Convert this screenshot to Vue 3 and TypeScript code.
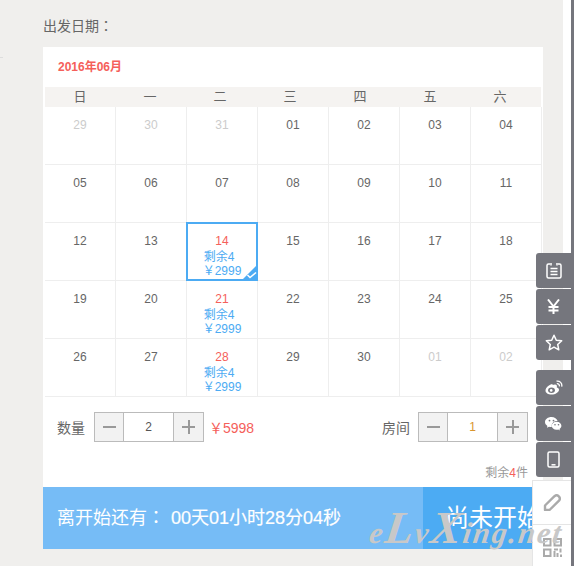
<script setup lang="ts">
interface Day {
  label: string
  muted?: boolean
  stock?: boolean
  selected?: boolean
}

const weekdays = ['日', '一', '二', '三', '四', '五', '六']

const mk = (n: number): Day => {
  const label = String(n).padStart(2, '0')
  if (n === 14) return { label, stock: true, selected: true }
  if (n === 21 || n === 28) return { label, stock: true }
  return { label }
}

const days: Day[] = [
  ...[29, 30, 31].map((n) => ({ label: String(n), muted: true })),
  ...Array.from({ length: 30 }, (_, i) => mk(i + 1)),
  { label: '01', muted: true },
  { label: '02', muted: true },
]
</script>

<template>
  <div class="page">
    <i class="edge-tick"></i>
    <div class="title">出发日期：</div>

    <div class="card">
      <div class="month">2016年06月</div>
      <div class="cal">
        <div class="week">
          <span v-for="w in weekdays" :key="w">{{ w }}</span>
        </div>
        <div class="grid">
          <div
            v-for="(d, i) in days"
            :key="i"
            class="cell"
            :class="{ muted: d.muted, stock: d.stock, selected: d.selected }"
          >
            <div class="num">{{ d.label }}</div>
            <template v-if="d.stock">
              <div class="info first">剩余4</div>
              <div class="info">￥2999</div>
            </template>
            <svg v-if="d.selected" class="tick" width="17" height="17" viewBox="0 0 17 17">
              <path d="M17 0V17H0Z" fill="#4cabf3" />
              <path d="M6.500 11l2.500 2.500 6-5" fill="none" stroke="#fff" stroke-width="1.600" />
            </svg>
          </div>
        </div>
      </div>

      <div class="controls">
        <div class="group">
          <span class="label">数量</span>
          <div class="stepper">
            <span class="btn minus"></span>
            <span class="val">2</span>
            <span class="btn plus"></span>
          </div>
          <span class="total">￥5998</span>
        </div>
        <div class="group">
          <span class="label">房间</span>
          <div class="stepper">
            <span class="btn minus"></span>
            <span class="val gold">1</span>
            <span class="btn plus"></span>
          </div>
        </div>
      </div>

      <div class="remain">剩余<b>4</b>件</div>

      <div class="bar">
        <div class="countdown">
          <span class="cd-label">离开始还有：</span>
          <span class="cd-time">00天01小时28分04秒</span>
        </div>
        <div class="action">尚未开始</div>
      </div>
    </div>

    <aside class="side">
      <div class="tools">
        <a class="tool">
          <svg width="16" height="17" viewBox="0 0 16 17" fill="none" stroke="#fff" stroke-width="1.500">
            <path d="M4 2H2.500A1.500 1.500 0 0 0 1 3.500v11A1.500 1.500 0 0 0 2.500 16h11a1.500 1.500 0 0 0 1.500-1.500v-11A1.500 1.500 0 0 0 13.500 2H12" />
            <path d="M5 1v2.500M11 1v2.500M4.500 6.500h7M4.500 9.500h7M4.500 12.500h7" />
          </svg>
        </a>
        <a class="tool">
          <svg width="13" height="15" viewBox="0 0 13 15" fill="none" stroke="#fff" stroke-width="2">
            <path d="M1 .5l5.500 7 5.500-7M6.500 7.500V15M1.500 8h10M1.500 11.500h10" />
          </svg>
        </a>
        <a class="tool">
          <svg width="18" height="17" viewBox="0 0 18 17" fill="none" stroke="#fff" stroke-width="1.500" stroke-linejoin="round">
            <path d="M9 1.200l2.300 5 5.400.6-4 3.700 1.100 5.300L9 13.100l-4.800 2.700 1.100-5.300-4-3.700 5.400-.6z" />
          </svg>
        </a>
      </div>
      <div class="tools second">
        <a class="tool">
          <svg width="18" height="15" viewBox="0 0 18 15" fill="none" stroke="#fff">
            <path d="M7.500 4C4.500 4.500.5 7.500.5 10.500c0 2.500 2.700 4 6 4 4 0 7.500-2.300 7.500-4.800 0-1.500-1.300-2-2.200-2.300.5-1.600-.2-2.900-1.800-2.900-.9 0-1.700.2-2.500.5z" fill="#fff" stroke="none" />
            <ellipse cx="6.500" cy="10.200" rx="3.400" ry="2.700" fill="#75767d" stroke="none" />
            <circle cx="6.200" cy="10.400" r="1.300" fill="#fff" stroke="none" />
            <path d="M11.500 1.200c3.200-.6 6 1.900 5.200 5.400M11.800 3.700c1.800-.2 2.900 1 2.500 2.700" stroke-width="1.300" />
          </svg>
        </a>
        <a class="tool">
          <svg width="17" height="14" viewBox="0 0 17 14">
            <path d="M6.500 0C3 0 0 2.200 0 5c0 1.600.9 2.900 2.400 3.900L1.900 10.800l2.100-1.100c.8.200 1.600.3 2.500.3h.4a4 4 0 0 1-.2-1.300c0-2.700 2.500-4.700 5.600-4.700h.3C12 1.700 9.500 0 6.500 0z" fill="#fff" />
            <path d="M11.700 4.800c-2.900 0-5 1.800-5 4s2.100 4 5 4c.6 0 1.100-.1 1.600-.2l1.600.9-.4-1.500c1.200-.8 1.900-2 1.900-3.200 0-2.200-2.100-4-4.700-4z" fill="#fff" />
            <circle cx="4.500" cy="3.600" r=".9" fill="#75767d" />
            <circle cx="8.500" cy="3.600" r=".9" fill="#75767d" />
            <circle cx="10" cy="7.800" r=".8" fill="#75767d" />
            <circle cx="13.500" cy="7.800" r=".8" fill="#75767d" />
          </svg>
        </a>
        <a class="tool">
          <svg width="13" height="17" viewBox="0 0 13 17" fill="none" stroke="#fff" stroke-width="1.500">
            <rect x="1" y="1" width="11" height="15" rx="1.500" />
            <path d="M4.500 13.800h4" />
          </svg>
        </a>
      </div>
      <div class="extra">
        <a class="extra-item">
          <svg width="18" height="17" viewBox="0 0 18 17" fill="none" stroke="#aaa" stroke-width="2.400" stroke-linejoin="round">
            <path d="M2 11.500L11.500 2.200a3.200 3.200 0 0 1 4.500 4.500L6.500 16H2z" />
          </svg>
        </a>
        <a class="extra-item qr">
          <svg width="19" height="19" viewBox="0 0 19 19" fill="none" stroke="#aaa" stroke-width="2">
            <rect x="1" y="1" width="6.500" height="6.500" />
            <rect x="11.500" y="1" width="6.500" height="6.500" />
            <rect x="1" y="11.500" width="6.500" height="6.500" />
            <path d="M11 11.500h4M17.500 10.500v4M11.500 13v6M14.500 15v4M18 16.500V19" />
          </svg>
        </a>
      </div>
    </aside>

    <div class="watermark">e<em>L</em>v<em>X</em>ing.net</div>
  </div>
</template>

<style scoped>
.page {
  position: relative;
  width: 574px;
  height: 566px;
  overflow: hidden;
  box-sizing: border-box;
  padding-left: 43px;
  background: #f0efed;
  color: #666;
  font-family: "Liberation Sans", "Noto Sans CJK SC", sans-serif;
  font-size: 12px;
}

/* white gutter and dark rail on the right of the window */
.page::after {
  content: "";
  position: absolute;
  top: 0;
  right: 0;
  bottom: 0;
  width: 3px;
  background: #75767d;
  border-left: 8px solid #fff;
}

.edge-tick {
  position: absolute;
  left: 0;
  top: 57px;
  width: 3px;
  height: 1px;
  background: #ddd;
}

.title {
  height: 47px;
  line-height: 53px;
  font-family: "Liberation Sans", "Noto Sans CJK TC", sans-serif;
  font-size: 14px;
}

.card {
  width: 500px;
  background: #fff;
}

.month {
  height: 40px;
  line-height: 41px;
  padding-left: 15px;
  font-weight: bold;
  color: #f5605a;
}

.cal {
  padding-left: 2px;
}

.week {
  display: grid;
  grid-template-columns: repeat(7, 70px);
  width: 496px;
  height: 20px;
  line-height: 20px;
  background: #f5f3f1;
  text-align: center;
  font-size: 13px;
}

.grid {
  display: grid;
  grid-template-columns: repeat(7, 71px);
  grid-auto-rows: 58px;
}

.cell {
  position: relative;
  box-sizing: border-box;
  padding-top: 11px;
  border-right: 1px solid #eee;
  border-bottom: 1px solid #eee;
  text-align: center;
  line-height: 15px;
}

.cell.muted .num {
  color: #ccc;
}

.cell.stock .num {
  color: #f5605a;
}

.info {
  line-height: 14px;
  color: #4cabf3;
}

.info.first {
  margin: 1px 6px 0 0;
}

.cell.selected::after {
  content: "";
  position: absolute;
  inset: -1px;
  border: 2px solid #4cabf3;
}

.tick {
  position: absolute;
  right: -1px;
  bottom: -1px;
  z-index: 1;
}

.controls {
  display: flex;
  justify-content: space-between;
  padding: 15px 15px 0 14px;
}

.group {
  display: flex;
  align-items: center;
}

.label {
  margin-right: 9px;
  font-size: 14px;
}

.group + .group .label {
  margin-right: 8px;
}

.stepper {
  display: flex;
  box-sizing: border-box;
  width: 110px;
  height: 30px;
  border: 1px solid #bbb;
}

.btn {
  position: relative;
  width: 29px;
  background: #f2f2f2;
}

.btn.minus {
  width: 28px;
}

.btn::before,
.plus::after {
  content: "";
  position: absolute;
  background: #999;
}

.btn::before {
  left: 8px;
  top: 13px;
  width: 13px;
  height: 2px;
}

.plus::after {
  left: 14px;
  top: 7px;
  width: 2px;
  height: 14px;
}

.val {
  flex: 1;
  border-left: 1px solid #bbb;
  border-right: 1px solid #bbb;
  line-height: 28px;
  text-align: center;
  color: #555;
}

.val.gold {
  color: #d9952e;
}

.total {
  margin-left: 5px;
  font-size: 14px;
  color: #f5605a;
}

.remain {
  margin-top: 23px;
  padding-right: 15px;
  height: 22px;
  line-height: 17px;
  text-align: right;
  color: #999;
}

.remain b {
  font-weight: normal;
  color: #f5605a;
}

.bar {
  display: flex;
  width: 520px;
  height: 62px;
  color: #fff;
  font-size: 18px;
  line-height: 62px;
  background: #76bcf6;
}

.countdown {
  flex: 1;
  padding-left: 14px;
}

.cd-label {
  margin-right: 6px;
  font-family: "Liberation Sans", "Noto Sans CJK TC", sans-serif;
}

.cd-time {
  -webkit-text-stroke: 0.2px #fff;
}

.action {
  width: 140px;
  background: #4cabf3;
  font-size: 24px;
  text-align: center;
}

.side {
  position: absolute;
  top: 253px;
  left: 532px;
  width: 39px;
  bottom: 0;
  display: flex;
  flex-direction: column;
  align-items: flex-end;
  z-index: 2;
}

.tools {
  width: 35px;
  display: flex;
  flex-direction: column;
  gap: 1px;
}

.tools.second {
  margin-top: 10px;
}

.tool {
  display: flex;
  align-items: center;
  justify-content: center;
  height: 35px;
  background: #75767d;
  border-radius: 3px 0 0 3px;
}

.extra {
  box-sizing: border-box;
  width: 39px;
  margin-top: 3px;
  flex: 1;
  background: #fff;
  border: 1px solid #e5e5e5;
  border-bottom: 0;
  border-right: 0;
}

.extra-item {
  display: flex;
  align-items: center;
  justify-content: center;
  height: 43px;
  border-bottom: 1px solid #e5e5e5;
}

.extra-item.qr {
  height: 42px;
  padding-top: 1px;
  border-bottom: 0;
}

.watermark {
  position: absolute;
  left: 370px;
  top: 498px;
  z-index: 3;
  font-family: "Liberation Serif", serif;
  font-style: italic;
  font-weight: bold;
  font-size: 30px;
  line-height: 60px;
  letter-spacing: 2px;
  white-space: nowrap;
  color: #c8c8c8;
  transform: skewX(-8deg);
}

.watermark em {
  font-size: 46px;
}
</style>
